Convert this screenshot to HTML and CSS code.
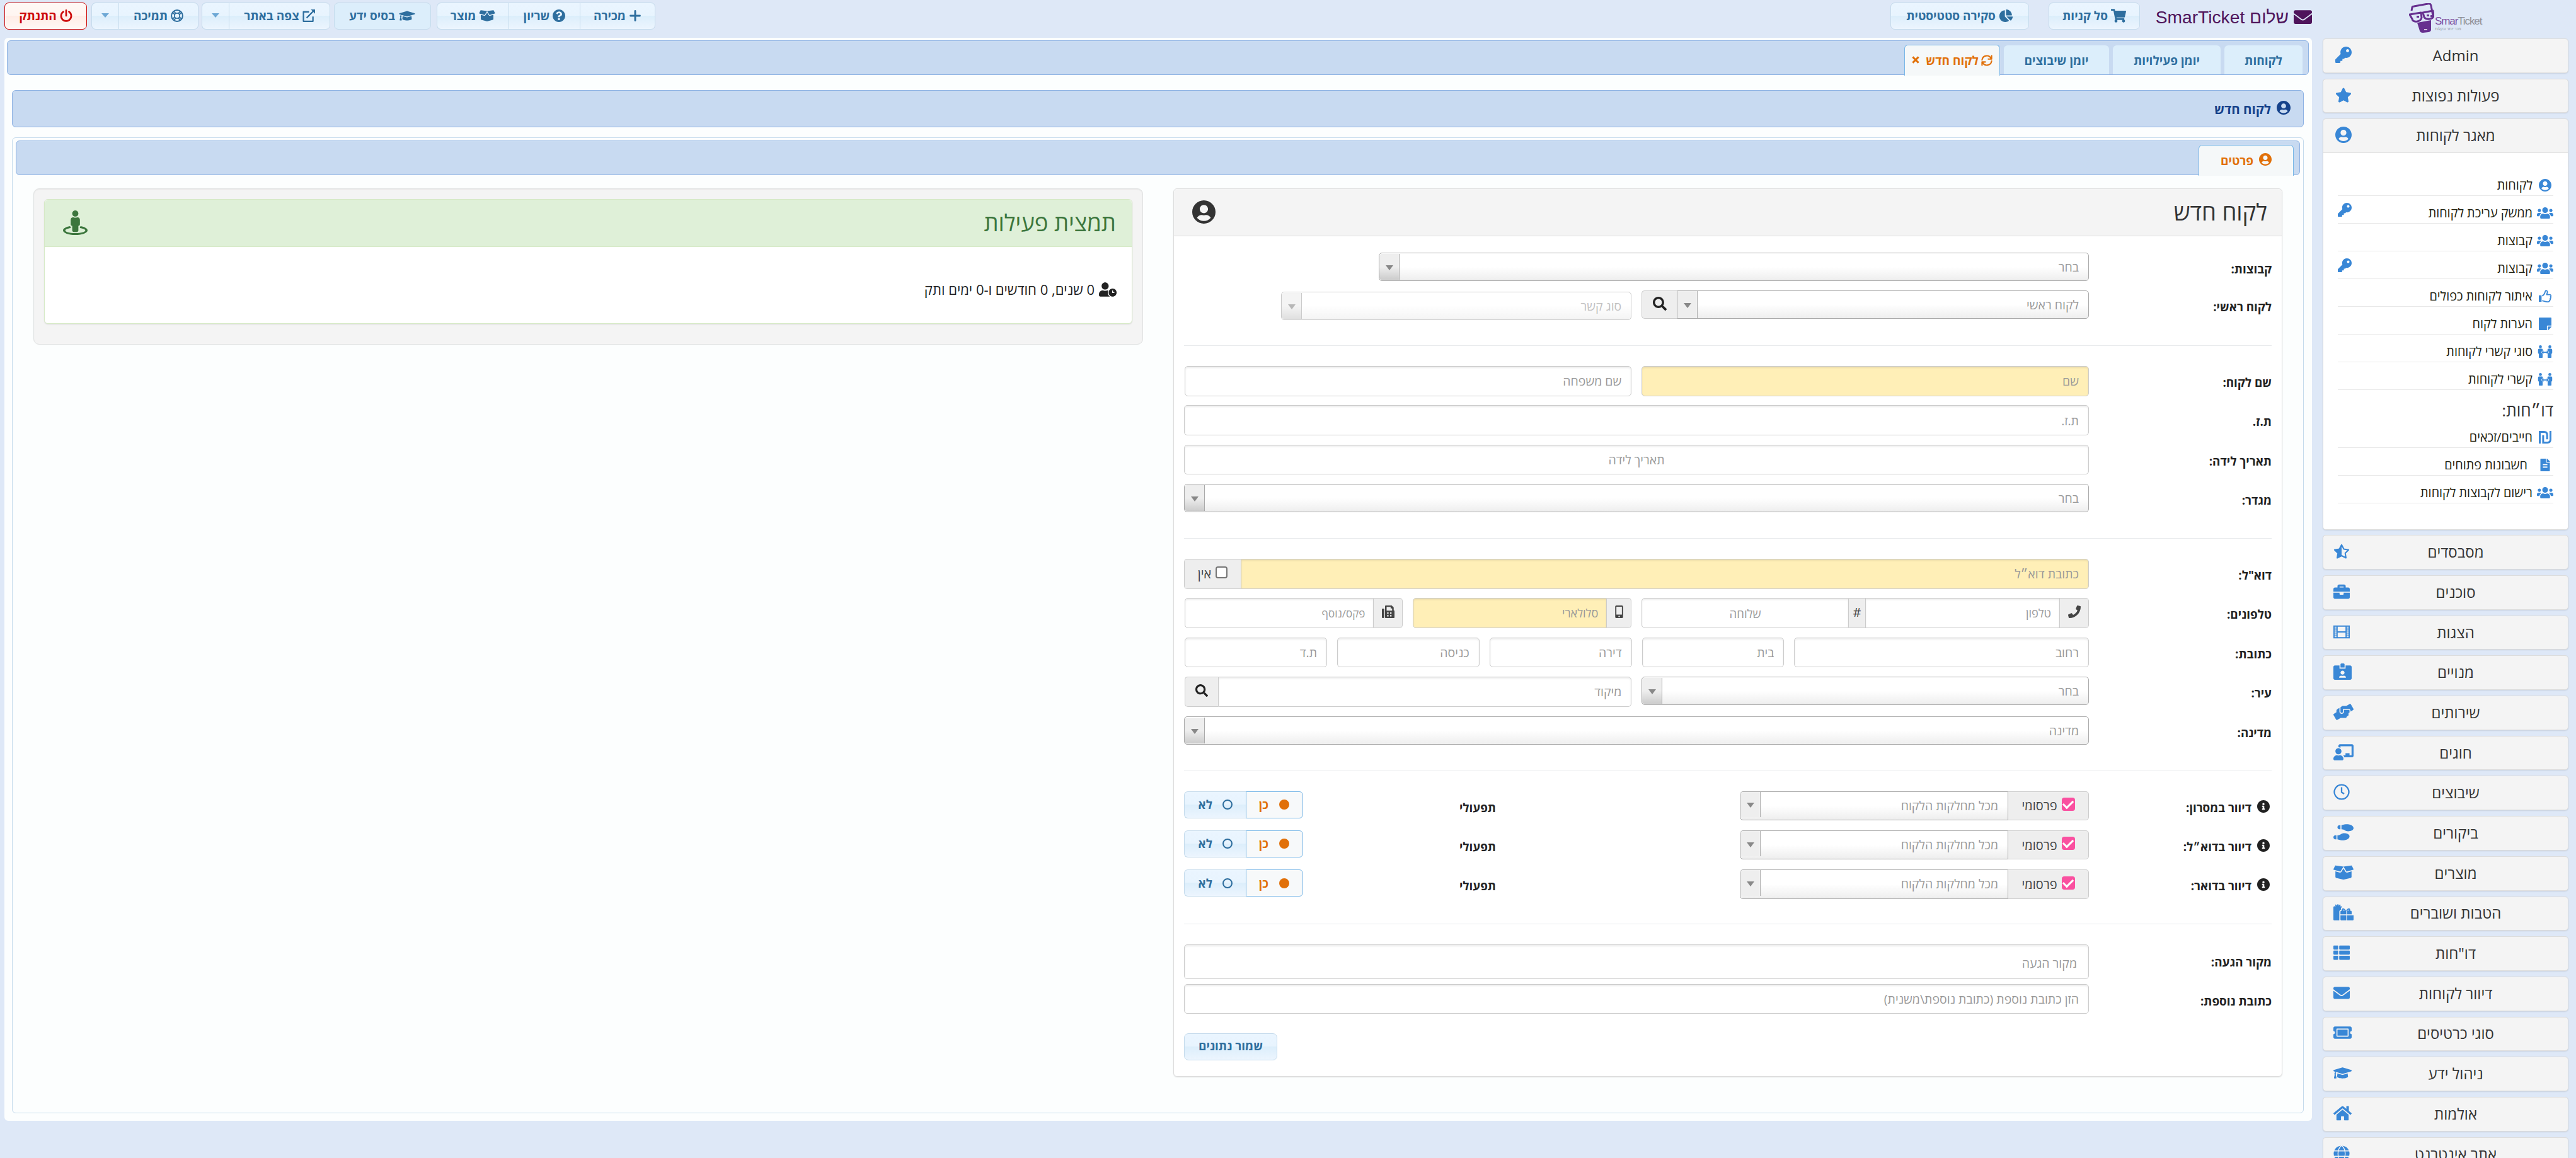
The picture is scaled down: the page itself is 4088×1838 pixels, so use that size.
FILE: index.html
```html
<!DOCTYPE html>
<html lang="he" dir="rtl">
<head>
  <meta charset="utf-8">
  <title>SmarTicket - לקוח חדש</title>
  <link rel="stylesheet" href="styles.css">
</head>
<body>

  <!-- icon sprite -->
  <svg class="sprite" width="0" height="0">
    <symbol id="envelope" viewBox="0 64 512 384"><path d="M502.3 190.8c3.9-3.1 9.7-.2 9.7 4.7V400c0 26.5-21.5 48-48 48H48c-26.5 0-48-21.5-48-48V195.6c0-5 5.7-7.8 9.7-4.7 22.4 17.4 52.1 39.5 154.1 113.6 21.1 15.4 56.7 47.8 92.2 47.6 35.7.3 72-32.8 92.3-47.6 102-74.1 131.6-96.3 154-113.7zM256 320c23.2.4 56.6-29.2 73.4-41.4 132.7-96.3 142.8-104.7 173.4-128.7 5.8-4.5 9.2-11.5 9.2-18.9v-19c0-26.5-21.5-48-48-48H48c-26.5 0-48 21.5-48 48v19c0 7.4 3.4 14.3 9.2 18.9 30.6 23.9 40.7 32.4 173.4 128.7 16.8 12.2 50.2 41.8 73.4 41.4z"/></symbol>
    <symbol id="user-circle" viewBox="0 8 496 496"><path d="M248 8C111 8 0 119 0 256s111 248 248 248 248-111 248-248S385 8 248 8zm0 96c48.6 0 88 39.4 88 88s-39.4 88-88 88-88-39.4-88-88 39.4-88 88-88zm0 344c-58.7 0-111.3-26.6-146.5-68.2 18.8-35.4 55.6-59.8 98.5-59.8 2.4 0 4.8.4 7.1 1.1 13 4.2 26.6 6.9 40.9 6.9 14.3 0 28-2.7 40.9-6.9 2.3-.7 4.7-1.1 7.1-1.1 42.9 0 79.7 24.4 98.5 59.8C359.3 421.4 306.7 448 248 448z"/></symbol>
    <symbol id="star" viewBox="0 0 576 512"><path d="M259.3 17.8L194 150.2 47.9 171.5c-26.2 3.8-36.7 36.1-17.7 54.6l105.7 103-25 145.5c-4.5 26.3 23.2 46 46.4 33.7L288 439.6l130.7 68.7c23.2 12.2 50.9-7.4 46.4-33.7l-25-145.5 105.7-103c19-18.5 8.5-50.8-17.7-54.6L382 150.2 316.7 17.8c-11.7-23.6-45.6-23.9-57.4 0z"/></symbol>
    <symbol id="star-half" viewBox="0 0 576 512"><path fill="none" stroke="currentColor" stroke-width="46" stroke-linejoin="round" d="M288 30l78 148 168 26-118 120 26 164-154-76-154 76 26-164L42 204l168-26z"/><path d="M288 30v382l-154 76 26-164L42 204l168-26z"/></symbol>
    <symbol id="key" viewBox="0 0 512 512"><path d="M512 176.001C512 273.203 433.202 352 336 352c-11.22 0-22.19-1.062-32.827-3.069l-24.012 27.014A23.999 23.999 0 0 1 261.223 384H224v40c0 13.255-10.745 24-24 24h-40v40c0 13.255-10.745 24-24 24H24c-13.255 0-24-10.745-24-24v-78.059c0-6.365 2.529-12.47 7.029-16.971l161.802-161.802C163.108 213.814 160 195.271 160 176 160 78.798 238.797.001 335.999 0 433.488-.001 512 78.511 512 176.001zM336 128c0 26.51 21.49 48 48 48s48-21.49 48-48-21.49-48-48-48-48 21.49-48 48z"/></symbol>
    <symbol id="users" viewBox="0 32 640 448"><path d="M96 224c35.3 0 64-28.7 64-64s-28.7-64-64-64-64 28.7-64 64 28.7 64 64 64zm448 0c35.3 0 64-28.7 64-64s-28.7-64-64-64-64 28.7-64 64 28.7 64 64 64zm32 32h-64c-17.6 0-33.5 7.1-45.1 18.6 40.3 22.1 68.9 62 75.1 109.4h66c17.7 0 32-14.3 32-32v-32c0-35.3-28.7-64-64-64zm-256 0c61.9 0 112-50.1 112-112S381.9 32 320 32 208 82.1 208 144s50.1 112 112 112zm76.8 32h-8.3c-20.8 10-43.9 16-68.5 16s-47.6-6-68.5-16h-8.3C179.6 288 128 339.6 128 403.2V432c0 26.5 21.5 48 48 48h288c26.5 0 48-21.5 48-48v-28.8c0-63.6-51.6-115.2-115.2-115.2zm-223.7-13.4C161.5 263.1 145.6 256 128 256H64c-35.3 0-64 28.7-64 64v32c0 17.7 14.3 32 32 32h65.9c6.3-47.4 34.9-87.3 75.2-109.4z"/></symbol>
    <symbol id="thumb" viewBox="0 0 512 512"><path d="M0 224h112v264H0z"/><path fill="none" stroke="currentColor" stroke-width="46" stroke-linejoin="round" d="M135 250c50-20 95-90 110-130 12-40 15-92 45-92 55 0 70 60 50 105-8 22-20 42-20 60h115c70 0 70 80 35 92 30 25 15 70-12 78 15 30 0 62-25 70 0 45-25 55-75 55-110 0-150-45-223-45"/></symbol>
    <symbol id="note" viewBox="0 32 448 448"><path d="M312 320h136V56c0-13.3-10.7-24-24-24H24C10.7 32 0 42.7 0 56v400c0 13.3 10.7 24 24 24h264V344c0-13.2 10.8-24 24-24zm129 55l-98 98c-4.5 4.5-10.6 7-17 7h-6V352h128v6.1c0 6.3-2.5 12.4-7 16.9z"/></symbol>
    <symbol id="people" viewBox="0 0 576 512"><circle cx="96" cy="62" r="60"/><circle cx="480" cy="62" r="60"/><path d="M44 140h104c20 0 38 14 42 34l8 34-80 76 68 62v140c0 16-12 26-28 26H60c-16 0-28-10-28-26V350C12 340 0 320 0 300V190c0-28 18-50 44-50zM532 140H428c-20 0-38 14-42 34l-8 34 80 76-68 62v140c0 16 12 26 28 26h98c16 0 28-10 28-26V350c20-10 32-30 32-50V190c0-28-18-50-44-50z"/><path d="M140 284l80-74v50h136v-50l80 74-80 74v-50H220v50z"/></symbol>
    <symbol id="shekel" viewBox="0 0 448 448"><path fill="none" stroke="currentColor" stroke-width="66" d="M34 448V34h150c70 0 112 40 112 110v150M154 150v264h150c70 0 110-45 110-110V0"/></symbol>
    <symbol id="file" viewBox="0 0 384 512"><path d="M224 136V0H24C10.7 0 0 10.7 0 24v464c0 13.3 10.7 24 24 24h336c13.3 0 24-10.7 24-24V160H248c-13.2 0-24-10.8-24-24zm64 236c0 6.6-5.4 12-12 12H108c-6.6 0-12-5.4-12-12v-8c0-6.6 5.4-12 12-12h168c6.6 0 12 5.4 12 12v8zm0-64c0 6.6-5.4 12-12 12H108c-6.6 0-12-5.4-12-12v-8c0-6.6 5.4-12 12-12h168c6.6 0 12 5.4 12 12v8zm0-72v8c0 6.6-5.4 12-12 12H108c-6.6 0-12-5.4-12-12v-8c0-6.6 5.4-12 12-12h168c6.6 0 12 5.4 12 12zm96-114.1v6.1H256V0h6.1c6.4 0 12.5 2.5 17 7l97.9 98c4.5 4.5 7 10.6 7 16.9z"/></symbol>
    <symbol id="briefcase" viewBox="0 0 512 512"><path d="M320 336c0 8.84-7.16 16-16 16h-96c-8.84 0-16-7.16-16-16v-48H0v144c0 25.6 22.4 48 48 48h416c25.6 0 48-22.4 48-48V288H320v48zm144-208h-80V80c0-25.6-22.4-48-48-48H176c-25.6 0-48 22.4-48 48v48H48c-25.6 0-48 22.4-48 48v80h512v-80c0-25.6-22.4-48-48-48zm-144 0H192V96h128v32z"/></symbol>
    <symbol id="film" viewBox="0 0 512 512"><path fill="none" stroke="currentColor" stroke-width="38" d="M19 75h474v362H19zM115 75v362M397 75v362M115 256h282"/><path fill="none" stroke="currentColor" stroke-width="24" d="M19 135h96M19 195h96M19 256h96M19 317h96M19 377h96M397 135h96M397 195h96M397 256h96M397 317h96M397 377h96"/></symbol>
    <symbol id="badge" viewBox="0 0 576 512"><path d="M528 64H384v96H192V64H48C21.5 64 0 85.5 0 112v352c0 26.5 21.5 48 48 48h480c26.5 0 48-21.5 48-48V112c0-26.5-21.5-48-48-48zM288 224c35.3 0 64 28.7 64 64s-28.7 64-64 64-64-28.7-64-64 28.7-64 64-64zm93.3 224H194.7c-10.4 0-18.8-10-15.6-19.8 8.3-25.6 32.4-44.2 60.9-44.2h8.2c12.3 5.1 25.7 8 39.8 8s27.6-2.9 39.8-8h8.2c28.4 0 52.5 18.5 60.9 44.2 3.2 9.9-5.2 19.8-15.6 19.8zM352 32c0-17.7-14.3-32-32-32h-64c-17.7 0-32 14.3-32 32v96h128V32z"/></symbol>
    <symbol id="hands" viewBox="0 0 640 512"><path d="M488 192H336v56c0 39.7-32.3 72-72 72s-72-32.3-72-72V126.4l-64.9 39C107.8 176.9 96 197.8 96 220.2v47.3l-80 46.2C.7 322.5-4.6 342.1 4.3 357.4l80 138.6c8.8 15.3 28.4 20.5 43.7 11.7L231.4 448H368c35.3 0 64-28.7 64-64h16c17.7 0 32-14.3 32-32v-64h8c13.3 0 24-10.7 24-24v-48c0-13.3-10.7-24-24-24zm147.7-37.4L555.7 16C546.9.7 527.3-4.5 512 4.3L408.6 64H306.4c-12 0-23.7 3.4-33.9 9.7L239 94.6c-9.4 5.8-15 16.1-15 27.1V248c0 22.1 17.9 40 40 40s40-17.9 40-40v-88h184c30.9 0 56 25.1 56 56v28.5l80-46.2c15.3-8.9 20.5-28.4 11.7-43.7z"/></symbol>
    <symbol id="teacher" viewBox="0 0 640 512"><path d="M208 352c-2.39 0-4.78.35-7.06 1.09C187.98 357.3 174.35 360 160 360c-14.35 0-27.98-2.7-40.95-6.91-2.28-.74-4.66-1.09-7.05-1.09C49.94 352-.33 402.48 0 464.62.14 490.88 21.73 512 48 512h224c26.27 0 47.86-21.12 48-47.38.33-62.14-49.94-112.62-112-112.62zm-48-32c53.02 0 96-42.98 96-96s-42.98-96-96-96-96 42.98-96 96 42.98 96 96 96zM592 0H208c-26.47 0-48 22.25-48 49.59V96c23.42 0 45.1 6.78 64 17.8V64h352v288h-64v-64H384v64h-76.24c19.1 16.69 33.12 38.73 39.69 64H592c26.47 0 48-22.25 48-49.59V49.59C640 22.25 618.47 0 592 0z"/></symbol>
    <symbol id="clock" viewBox="0 0 512 512"><path fill="none" stroke="currentColor" stroke-width="46" d="M256 31a225 225 0 1 0 .1 0zM256 110v155l80 52"/></symbol>
    <symbol id="shoes" viewBox="0 0 640 512"><path d="M192 160h32V32h-32c-35.35 0-64 28.65-64 64s28.65 64 64 64zM0 416c0 35.35 28.65 64 64 64h32V352H64c-35.35 0-64 28.65-64 64zm337.46-128c-34.91 0-76.16 13.12-104.73 32-24.79 16.38-44.52 32-104.73 32v128l57.53 15.97c26.21 7.28 53.01 13.12 80.31 15.05 32.69 2.31 65.6.67 97.58-6.2C472.9 481.3 512 429.22 512 384c0-64-84.18-96-174.54-96zM491.42 7.19C459.44.32 426.53-1.33 393.84.99c-27.3 1.93-54.1 7.77-80.31 15.04L256 32v128c60.2 0 79.94 15.62 104.73 32 28.57 18.88 69.82 32 104.73 32C555.82 224 640 192 640 128c0-45.22-39.1-97.3-148.58-120.81z"/></symbol>
    <symbol id="box" viewBox="0 0 640 512"><path d="M425.7 256c-16.9 0-32.8-9-41.4-23.4L320 126l-64.2 106.6c-8.7 14.5-24.6 23.5-41.5 23.5-4.5 0-9-.6-13.3-1.9L64 215v178c0 14.7 10 27.5 24.2 31l216.2 54.1c10.2 2.5 20.9 2.5 31 0L551.8 424c14.2-3.6 24.2-16.4 24.2-31V215l-137 39.1c-4.3 1.3-8.8 1.9-13.3 1.9zm212.6-112.2L586.8 41c-3.1-6.2-9.8-9.8-16.7-8.9L320 64l91.7 152.1c3.8 6.3 11.4 9.3 18.5 7.3l197.9-56.5c9.9-2.9 14.7-13.9 10.2-23.1zM53.2 41L1.7 143.8c-4.6 9.2.3 20.2 10.1 23l197.9 56.5c7.1 2 14.7-1 18.5-7.3L320 64 69.8 32.1c-6.9-.8-13.5 2.7-16.6 8.9z"/></symbol>
    <symbol id="gifts" viewBox="0 0 640 512"><path d="M32 64h40L50 22l30-14 32 40 16-48h30l14 48 32-40 30 16-22 40h38c12 0 22 8 28 18-34 20-46 60-34 88-40 8-56 40-56 70v272H32c-18 0-32-14-32-32V96c0-18 14-32 32-32z"/><path d="M224 240c0-18 14-32 32-32h20c-30-60 20-90 60-70 30 15 45 40 64 70 20-30 34-55 64-70 40-20 90 10 60 70h24c18 0 32 14 32 32v80H432v-112h-24v112H224zM224 352h184v160H256c-18 0-32-14-32-32zM432 352h208v128c0 18-14 32-32 32H432z"/><path fill="#f4f4f4" d="M312 200c-14-26 14-40 36-14l12 14zM488 200c14-26-14-40-36-14l-12 14z"/></symbol>
    <symbol id="list" viewBox="0 0 512 512"><path d="M24 32h102c13 0 24 11 24 24v80c0 13-11 24-24 24H24c-13 0-24-11-24-24V56c0-13 11-24 24-24zM206 32h282c13 0 24 11 24 24v80c0 13-11 24-24 24H206c-13 0-24-11-24-24V56c0-13 11-24 24-24zM24 192h102c13 0 24 11 24 24v80c0 13-11 24-24 24H24c-13 0-24-11-24-24v-80c0-13 11-24 24-24zM206 192h282c13 0 24 11 24 24v80c0 13-11 24-24 24H206c-13 0-24-11-24-24v-80c0-13 11-24 24-24zM24 352h102c13 0 24 11 24 24v80c0 13-11 24-24 24H24c-13 0-24-11-24-24v-80c0-13 11-24 24-24zM206 352h282c13 0 24 11 24 24v80c0 13-11 24-24 24H206c-13 0-24-11-24-24v-80c0-13 11-24 24-24z"/></symbol>
    <symbol id="mail" viewBox="0 0 512 512"><use href="#envelope" x="0" y="64" width="512" height="384"/></symbol>
    <symbol id="ticket" viewBox="0 0 576 512"><path d="M128 160h320v192H128V160zm400 96c0 26.51 21.49 48 48 48v96c0 26.51-21.49 48-48 48H48c-26.51 0-48-21.49-48-48v-96c26.51 0 48-21.49 48-48s-21.49-48-48-48v-96c0-26.51 21.49-48 48-48h480c26.51 0 48 21.49 48 48v96c-26.51 0-48 21.49-48 48zm-48-104c0-13.255-10.745-24-24-24H120c-13.255 0-24 10.745-24 24v208c0 13.255 10.745 24 24 24h336c13.255 0 24-10.745 24-24V152z"/></symbol>
    <symbol id="cap" viewBox="0 0 640 512"><path d="M622.34 153.2L343.4 67.5c-15.2-4.67-31.6-4.67-46.79 0L17.66 153.2c-23.54 7.23-23.54 38.36 0 45.59l48.63 14.94c-10.67 13.19-17.23 29.28-17.88 46.9C38.78 266.15 32 276.11 32 288c0 10.78 5.68 19.85 13.86 25.65L20.33 428.53C18.11 438.52 25.71 448 35.94 448h56.11c10.24 0 17.84-9.48 15.62-19.47L82.14 313.65C90.32 307.85 96 298.78 96 288c0-11.57-6.47-21.25-15.66-26.87.76-15.02 8.44-28.3 20.69-36.72L296.6 284.5c9.06 2.78 26.44 6.25 46.79 0l278.95-85.7c23.55-7.24 23.55-38.36 0-45.6zM352.79 315.09c-28.53 8.76-52.84 3.92-65.59 0l-145.02-44.55L128 384c0 35.35 85.96 64 192 64s192-28.65 192-64l-14.18-113.47-145.03 44.56z"/></symbol>
    <symbol id="home" viewBox="0 0 576 512"><path d="M280.37 148.26L96 300.11V464a16 16 0 0 0 16 16l112.06-.29a16 16 0 0 0 15.92-16V368a16 16 0 0 1 16-16h64a16 16 0 0 1 16 16v95.64a16 16 0 0 0 16 16.05L464 480a16 16 0 0 0 16-16V300L295.67 148.26a12.19 12.19 0 0 0-15.3 0zM571.6 251.47L488 182.56V44.05a12 12 0 0 0-12-12h-56a12 12 0 0 0-12 12v72.61L318.47 43a48 48 0 0 0-61 0L4.34 251.47a12 12 0 0 0-1.6 16.9l25.5 31A12 12 0 0 0 45.15 301l235.22-193.74a12.19 12.19 0 0 1 15.3 0L530.9 301a12 12 0 0 0 16.9-1.6l25.5-31a12 12 0 0 0-1.7-16.93z"/></symbol>
    <symbol id="globe" viewBox="0 0 496 512"><circle cx="248" cy="256" r="248"/><path fill="none" stroke="#f4f4f4" stroke-width="26" d="M0 172h496M0 340h496M248 0c-150 130-150 382 0 512M248 0c150 130 150 382 0 512"/></symbol>
    <symbol id="cart" viewBox="0 0 576 512"><path d="M528.12 301.319l47.273-208C578.806 78.301 567.391 64 551.99 64H159.208l-9.166-44.81C147.758 8.021 137.93 0 126.529 0H24C10.745 0 0 10.745 0 24v16c0 13.255 10.745 24 24 24h69.883l70.248 343.435C147.325 417.1 136 435.222 136 456c0 30.928 25.072 56 56 56s56-25.072 56-56c0-15.674-6.447-29.835-16.824-40h209.647C430.447 426.165 424 440.326 424 456c0 30.928 25.072 56 56 56s56-25.072 56-56c0-22.172-12.888-41.332-31.579-50.405l5.517-24.276c3.413-15.018-8.002-29.319-23.403-29.319H218.117l-6.545-32h293.145c11.206 0 20.92-7.754 23.403-18.681z"/></symbol>
    <symbol id="pie" viewBox="0 0 544 512"><path d="M527.79 288H290.5l158.03 158.03c6.04 6.04 15.98 6.53 22.19.68 38.7-36.46 65.32-85.61 73.13-140.86 1.34-9.46-6.51-17.85-16.06-17.85zm-15.83-64.8C503.72 103.74 408.26 8.28 288.8.04 279.68-.59 272 7.1 272 16.24V240h223.77c9.14 0 16.82-7.68 16.19-16.8zM224 288V50.71c0-9.55-8.39-17.4-17.84-16.06C86.99 51.49-4.1 155.6.14 280.37 4.5 408.51 114.83 513.59 243.03 511.98c50.4-.63 96.97-16.87 135.26-44.03 7.9-5.6 8.42-17.23 1.57-24.08L224 288z"/></symbol>
    <symbol id="plus" viewBox="0 0 448 512"><path fill="none" stroke="currentColor" stroke-width="76" stroke-linecap="round" d="M224 66v380M34 256h380"/></symbol>
    <symbol id="question" viewBox="8 8 496 496"><path d="M504 256c0 136.997-111.043 248-248 248S8 392.997 8 256C8 119.083 119.043 8 256 8s248 111.083 248 248zM262.655 90c-54.497 0-89.255 22.957-116.549 63.758-3.536 5.286-2.353 12.415 2.715 16.258l34.699 26.31c5.205 3.947 12.621 3.008 16.665-2.122 17.864-22.658 30.113-35.797 57.303-35.797 20.429 0 45.698 13.148 45.698 32.958 0 14.976-12.363 22.667-32.534 33.976C247.128 238.528 216 254.941 216 296v4c0 6.627 5.373 12 12 12h56c6.627 0 12-5.373 12-12v-1.333c0-28.462 83.186-29.647 83.186-106.667 0-58.002-60.165-102-116.531-102zM256 338c-25.365 0-46 20.635-46 46 0 25.364 20.635 46 46 46s46-20.636 46-46c0-25.365-20.635-46-46-46z"/></symbol>
    <symbol id="external" viewBox="0 0 512 512"><path fill="none" stroke="currentColor" stroke-width="58" stroke-linejoin="round" d="M270 96H40v386h386V290M170 342L440 72"/><path d="M340 0h172v172z"/></symbol>
    <symbol id="ring" viewBox="0 0 512 512"><g fill="none" stroke="currentColor"><circle cx="256" cy="256" r="228" stroke-width="50"/><circle cx="256" cy="256" r="108" stroke-width="44"/><path stroke-width="44" d="M74 124l96 88M124 74l88 96M438 124l-96 88M388 74l-88 96M74 388l96-88M124 438l88-96M438 388l-96-88M388 438l-88-96"/></g></symbol>
    <symbol id="power" viewBox="0 0 512 512"><path fill="none" stroke="currentColor" stroke-width="70" stroke-linecap="round" d="M256 36v220M142 92a206 206 0 1 0 228 0"/></symbol>
    <symbol id="sync" viewBox="0 0 512 512"><path fill="none" stroke="currentColor" stroke-width="60" stroke-linecap="round" stroke-linejoin="round" d="M40 230A216 216 0 0 1 450 170M472 40v150H322M472 282A216 216 0 0 1 62 342M40 472V322h150"/></symbol>
    <symbol id="close" viewBox="0 0 352 352"><path stroke="currentColor" stroke-width="84" d="M40 40l272 272M312 40L40 312"/></symbol>
    <symbol id="search" viewBox="0 0 512 512"><path d="M505 442.7L405.3 343c-4.5-4.5-10.6-7-17-7H372c27.6-35.3 44-79.7 44-128C416 93.1 322.9 0 208 0S0 93.1 0 208s93.1 208 208 208c48.3 0 92.7-16.4 128-44v16.3c0 6.4 2.5 12.5 7 17l99.7 99.7c9.4 9.4 24.6 9.4 33.9 0l28.3-28.3c9.4-9.4 9.4-24.6.1-34zM208 336c-70.7 0-128-57.2-128-128 0-70.7 57.2-128 128-128 70.7 0 128 57.2 128 128 0 70.7-57.2 128-128 128z"/></symbol>
    <symbol id="phone" viewBox="0 0 512 512"><path d="M493.4 24.6l-104-24c-11.3-2.6-22.9 3.3-27.5 13.9l-48 112c-4.2 9.8-1.4 21.3 6.9 28l60.6 49.6c-36 76.7-98.9 140.5-177.2 177.2l-49.6-60.6c-6.8-8.3-18.2-11.1-28-6.9l-112 48C3.9 366.5-2 378.1.6 389.4l24 104C27.1 504.2 36.7 512 48 512c256.1 0 464-207.5 464-464 0-11.2-7.7-20.9-18.6-23.4z"/></symbol>
    <symbol id="mobile" viewBox="0 0 320 512"><path fill-rule="evenodd" d="M48 0h224c26 0 48 22 48 48v416c0 26-22 48-48 48H48c-26 0-48-22-48-48V48C0 22 22 0 48 0zm0 54v320h224V54zm112 360a30 30 0 1 0 .1 0z"/></symbol>
    <symbol id="fax" viewBox="0 0 512 512"><path d="M30 130h36c16 0 30 14 30 30v322c0 16-14 30-30 30H30c-16 0-30-14-30-30V160c0-16 14-30 30-30z"/><path fill-rule="evenodd" d="M160 0h240l80 80v120c18 0 32 14 32 32v248c0 18-14 32-32 32H160c-18 0-32-14-32-32V32c0-18 14-32 32-32zm32 60v150h224V120h-60V60zm20 220v56h60v-56zm120 0v56h60v-56zm-120 110v56h60v-56zm120 0v56h60v-56z"/></symbol>
    <symbol id="info" viewBox="8 8 496 496"><path d="M256 8C119.043 8 8 119.083 8 256c0 136.997 111.043 248 248 248s248-111.003 248-248C504 119.083 392.957 8 256 8zm0 110c23.196 0 42 18.804 42 42s-18.804 42-42 42-42-18.804-42-42 18.804-42 42-42zm56 254c0 6.627-5.373 12-12 12h-88c-6.627 0-12-5.373-12-12v-24c0-6.627 5.373-12 12-12h12v-64h-12c-6.627 0-12-5.373-12-12v-24c0-6.627 5.373-12 12-12h64c6.627 0 12 5.373 12 12v100h12c6.627 0 12 5.373 12 12v24z"/></symbol>
    <symbol id="street" viewBox="0 0 512 512"><path d="M367.9 329.76c-4.62 5.3-9.78 10.1-15.9 13.65v22.94c66.52 9.34 112 28.05 112 49.65 0 30.93-93.12 56-208 56S48 446.93 48 416c0-21.6 45.48-40.3 112-49.65v-22.94c-6.12-3.55-11.28-8.35-15.9-13.65C58.87 345.34 0 378.05 0 416c0 53.02 114.62 96 256 96s256-42.98 256-96c0-37.95-58.87-70.66-144.1-86.24zM256 128c35.35 0 64-28.65 64-64S291.35 0 256 0s-64 28.65-64 64 28.65 64 64 64zm-64 192v96c0 17.67 14.33 32 32 32h64c17.67 0 32-14.33 32-32v-96c17.67 0 32-14.33 32-32v-96c0-26.51-21.49-48-48-48h-11.8c-11.07 5.03-23.26 8-36.2 8s-25.13-2.97-36.2-8H208c-26.51 0-48 21.49-48 48v96c0 17.67 14.33 32 32 32z"/></symbol>
    <symbol id="user-clock" viewBox="0 0 640 512"><path d="M496 224c-79.6 0-144 64.4-144 144s64.4 144 144 144 144-64.4 144-144-64.4-144-144-144zm64 150.3c0 5.3-4.4 9.7-9.7 9.7h-60.6c-5.3 0-9.7-4.4-9.7-9.7v-76.6c0-5.3 4.4-9.7 9.7-9.7h12.6c5.3 0 9.7 4.4 9.7 9.7V352h38.3c5.3 0 9.7 4.4 9.7 9.7v12.6zM320 368c0-27.8 6.7-54.1 18.2-77.5-8-1.5-16.2-2.5-24.6-2.5h-16.7c-22.2 10.2-46.9 16-72.9 16s-50.6-5.8-72.9-16h-16.7C60.2 288 0 348.2 0 422.4V464c0 26.5 21.5 48 48 48h347.1c-45.3-31.9-75.1-84.5-75.1-144zm-96-112c70.7 0 128-57.3 128-128S294.7 0 224 0 96 57.3 96 128s57.3 128 128 128z"/></symbol>
  </svg>

  <div class="page">

    <!-- side menu -->
    <aside class="sidebar">
      <div class="logo">
        <svg class="logo-mark" viewBox="0 0 40 47">
          <path fill="none" stroke="#67308f" stroke-width="3" stroke-linejoin="round" d="M4 12L5 7q0-2 3-2l22-4q4-1 5 3l3 16-4 1"/>
          <path fill="none" stroke="#67308f" stroke-width="3" stroke-linejoin="round" d="M1 18l18-3 1 8q-1 5-7 6-7 1-8-4zM22 15l16-3 1 7q0 5-6 6-7 1-9-3z"/>
          <path fill="#67308f" d="M13 31l22-4v15q0 3-4 4l-9 1q-4 0-5-3zM12 20h4v3h-4zM28 18h4v3h-4z"/>
          <path stroke="#fff" stroke-width="1.4" d="M24 42h5"/>
        </svg>
        <div class="logo-text" dir="ltr"><div><b>Smar</b>Ticket</div><small>מכר יותר ובקלות</small></div>
      </div>

      <div class="menu"><span>Admin</span><svg class="fa"><use href="#key"/></svg></div>
      <div class="menu"><span>פעולות נפוצות</span><svg class="fa"><use href="#star"/></svg></div>
      <div class="menu open"><span>מאגר לקוחות</span><svg class="fa"><use href="#user-circle"/></svg></div>
      <div class="submenu">
        <a class="item"><svg class="fi"><use href="#user-circle"/></svg>לקוחות</a>
        <a class="item"><svg class="fi wide"><use href="#users"/></svg>ממשק עריכת לקוחות<svg class="lock"><use href="#key"/></svg></a>
        <a class="item"><svg class="fi wide"><use href="#users"/></svg>קבוצות</a>
        <a class="item"><svg class="fi wide"><use href="#users"/></svg>קבוצות<svg class="lock"><use href="#key"/></svg></a>
        <a class="item"><svg class="fi"><use href="#thumb"/></svg>איתור לקוחות כפולים</a>
        <a class="item"><svg class="fi"><use href="#note"/></svg>הערות לקוח</a>
        <a class="item"><svg class="fi wide"><use href="#people"/></svg>סוגי קשרי לקוחות</a>
        <a class="item"><svg class="fi wide"><use href="#people"/></svg>קשרי לקוחות</a>
        <h4>דו״חות:</h4>
        <a class="item"><svg class="fi"><use href="#shekel"/></svg>חייבים/זכאים</a>
        <a class="item shifted"><svg class="fi"><use href="#file"/></svg>חשבונות פתוחים</a>
        <a class="item"><svg class="fi wide"><use href="#users"/></svg>רישום לקבוצות לקוחות</a>
      </div>
      <div class="menu low"><span>מסבסדים</span><svg class="fa"><use href="#star-half"/></svg></div>
      <div class="menu low"><span>סוכנים</span><svg class="fa"><use href="#briefcase"/></svg></div>
      <div class="menu low"><span>הצגות</span><svg class="fa"><use href="#film"/></svg></div>
      <div class="menu low"><span>מנויים</span><svg class="fa w28"><use href="#badge"/></svg></div>
      <div class="menu low"><span>שירותים</span><svg class="fa w32"><use href="#hands"/></svg></div>
      <div class="menu low"><span>חוגים</span><svg class="fa w32"><use href="#teacher"/></svg></div>
      <div class="menu low"><span>שיבוצים</span><svg class="fa"><use href="#clock"/></svg></div>
      <div class="menu low"><span>ביקורים</span><svg class="fa w32"><use href="#shoes"/></svg></div>
      <div class="menu low"><span>מוצרים</span><svg class="fa w32"><use href="#box"/></svg></div>
      <div class="menu low"><span>הטבות ושוברים</span><svg class="fa w32"><use href="#gifts"/></svg></div>
      <div class="menu low"><span>דו"חות</span><svg class="fa"><use href="#list"/></svg></div>
      <div class="menu low"><span>דיוור לקוחות</span><svg class="fa"><use href="#mail"/></svg></div>
      <div class="menu low"><span>סוגי כרטיסים</span><svg class="fa w28"><use href="#ticket"/></svg></div>
      <div class="menu low"><span>ניהול ידע</span><svg class="fa w28"><use href="#cap"/></svg></div>
      <div class="menu low"><span>אולמות</span><svg class="fa w28"><use href="#home"/></svg></div>
      <div class="menu low"><span>אתר אינטרנט</span><svg class="fa"><use href="#globe"/></svg></div>
    </aside>

    <div class="content">

      <!-- top toolbar -->
      <header class="topbar">
        <div class="hello"><svg class="hello-icon"><use href="#envelope"/></svg><span>שלום SmarTicket</span></div>
        <a class="btn cart"><svg class="bi"><use href="#cart"/></svg>סל קניות</a>
        <a class="btn stats"><svg class="bi"><use href="#pie"/></svg>סקירה סטטיסטית</a>

        <div class="tools">
          <div class="group g-new">
            <a class="btn b-sale"><svg class="bi"><use href="#plus"/></svg>מכירה</a>
            <a class="btn b-hold"><svg class="bi"><use href="#question"/></svg>שריון</a>
            <a class="btn b-prod"><svg class="bi w25"><use href="#box"/></svg>מוצר</a>
          </div>
          <a class="btn kb"><svg class="bi w28"><use href="#cap"/></svg>בסיס ידע</a>
          <div class="group g-site">
            <a class="btn b-main"><svg class="bi"><use href="#external"/></svg>צפה באתר</a>
            <a class="btn b-drop"><i class="caret"></i></a>
          </div>
          <div class="group g-help">
            <a class="btn b-main"><svg class="bi"><use href="#ring"/></svg>תמיכה</a>
            <a class="btn b-drop"><i class="caret"></i></a>
          </div>
          <a class="btn logout"><svg class="bi"><use href="#power"/></svg>התנתק</a>
        </div>
      </header>

      <main class="main">
        <nav class="tabs">
          <a class="tab t1">לקוחות</a>
          <a class="tab t2">יומן פעילויות</a>
          <a class="tab t3">יומן שיבוצים</a>
          <a class="tab t4 active"><svg class="ti"><use href="#sync"/></svg>לקוח חדש<svg class="tx"><use href="#close"/></svg></a>
        </nav>

        <div class="titlebar"><svg class="title-icon"><use href="#user-circle"/></svg>לקוח חדש</div>

        <div class="box">
          <nav class="tabs inner">
            <a class="tab details active"><svg class="di"><use href="#user-circle"/></svg>פרטים</a>
          </nav>

          <div class="columns">
            <section class="panel">
              <div class="panel-head"><h2>לקוח חדש</h2><svg class="head-icon"><use href="#user-circle"/></svg></div>
              <form class="panel-body">

                <div class="part first">
                  <div class="row">
                    <label>קבוצות:</label>
                    <div class="fields"><div class="select groups"><span>בחר</span><b><i></i></b></div></div>
                  </div>
                  <div class="row">
                    <label>לקוח ראשי:</label>
                    <div class="fields">
                      <div class="joined half"><div class="select plain"><span>לקוח ראשי</span><b><i></i></b></div><div class="addon find"><svg><use href="#search"/></svg></div></div>
                      <div class="select relation"><span>סוג קשר</span><b><i></i></b></div>
                    </div>
                  </div>
                </div>

                <div class="part">
                  <div class="row">
                    <label>שם לקוח:</label>
                    <div class="fields"><input class="half must" placeholder="שם"><input class="half" placeholder="שם משפחה"></div>
                  </div>
                  <div class="row">
                    <label>ת.ז.</label>
                    <div class="fields"><input class="full" placeholder="ת.ז."></div>
                  </div>
                  <div class="row">
                    <label>תאריך לידה:</label>
                    <div class="fields"><input class="full center" placeholder="תאריך לידה"></div>
                  </div>
                  <div class="row">
                    <label>מגדר:</label>
                    <div class="fields"><div class="select full"><span>בחר</span><b><i></i></b></div></div>
                  </div>
                </div>

                <div class="part">
                  <div class="row">
                    <label>דוא"ל:</label>
                    <div class="fields"><div class="joined full"><input class="must" placeholder="כתובת דוא״ל"><div class="addon none"><input type="checkbox">אין</div></div></div>
                  </div>
                  <div class="row">
                    <label>טלפונים:</label>
                    <div class="fields">
                      <div class="joined half phone"><div class="addon a-phone"><svg><use href="#phone"/></svg></div><input class="num" placeholder="טלפון"><div class="addon hash">#</div><input class="center ext" placeholder="שלוחה"></div>
                      <div class="joined mob"><div class="addon a-mob"><svg><use href="#mobile"/></svg></div><input class="must" placeholder="סלולארי"></div>
                      <div class="joined mob"><div class="addon a-fax"><svg><use href="#fax"/></svg></div><input class="fax" placeholder="פקס/נוסף"></div>
                    </div>
                  </div>
                  <div class="row">
                    <label>כתובת:</label>
                    <div class="fields"><input class="street" placeholder="רחוב"><input placeholder="בית"><input placeholder="דירה"><input placeholder="כניסה"><input placeholder="ת.ד"></div>
                  </div>
                  <div class="row">
                    <label>עיר:</label>
                    <div class="fields">
                      <div class="select half"><span>בחר</span><b><i></i></b></div>
                      <div class="joined half"><input placeholder="מיקוד"><div class="addon zip"><svg><use href="#search"/></svg></div></div>
                    </div>
                  </div>
                  <div class="row">
                    <label>מדינה:</label>
                    <div class="fields"><div class="select full"><span>מדינה</span><b><i></i></b></div></div>
                  </div>
                </div>

                <div class="part mailing">
                  <div class="row">
                    <label><svg class="info"><use href="#info"/></svg>דיוור במסרון:</label>
                    <div class="fields">
                      <div class="joined dept"><div class="addon promo"><input type="checkbox" checked>פרסומי</div><div class="select plain"><span>מכל מחלקות הלקוח</span><b><i></i></b></div></div>
                      <label class="oper">תפעולי</label>
                      <div class="toggle"><a class="yes"><i></i>כן</a><a class="no"><i></i>לא</a></div>
                    </div>
                  </div>
                  <div class="row">
                    <label><svg class="info"><use href="#info"/></svg>דיוור בדוא״ל:</label>
                    <div class="fields">
                      <div class="joined dept"><div class="addon promo"><input type="checkbox" checked>פרסומי</div><div class="select plain"><span>מכל מחלקות הלקוח</span><b><i></i></b></div></div>
                      <label class="oper">תפעולי</label>
                      <div class="toggle"><a class="yes"><i></i>כן</a><a class="no"><i></i>לא</a></div>
                    </div>
                  </div>
                  <div class="row">
                    <label><svg class="info"><use href="#info"/></svg>דיוור בדואר:</label>
                    <div class="fields">
                      <div class="joined dept"><div class="addon promo"><input type="checkbox" checked>פרסומי</div><div class="select plain"><span>מכל מחלקות הלקוח</span><b><i></i></b></div></div>
                      <label class="oper">תפעולי</label>
                      <div class="toggle"><a class="yes"><i></i>כן</a><a class="no"><i></i>לא</a></div>
                    </div>
                  </div>
                </div>

                <div class="part last">
                  <div class="row">
                    <label>מקור הגעה:</label>
                    <div class="fields"><input class="full tall" placeholder="מקור הגעה"></div>
                  </div>
                  <div class="row">
                    <label>כתובת נוספת:</label>
                    <div class="fields"><input class="full" placeholder="הזן כתובת נוספת (כתובת נוספת\משנית)"></div>
                  </div>
                </div>

                <div class="actions"><a class="btn save">שמור נתונים</a></div>
              </form>
            </section>

            <section class="well">
              <div class="summary">
                <div class="summary-head"><h2>תמצית פעילות</h2><svg><use href="#street"/></svg></div>
                <div class="summary-body"><svg><use href="#user-clock"/></svg>0 שנים, 0 חודשים ו-0 ימים ותק</div>
              </div>
            </section>
          </div>
        </div>
      </main>
    </div>
  </div>

</body>
</html>
```

FILE: styles.css
```css
* {
  box-sizing: border-box;
}

body {
  margin: 0;
  height: 1838px;
  overflow: hidden;
  background: #dee8f7;
  font-family: "Open Sans", "Liberation Sans", Arial, sans-serif;
  font-size: 19px;
  color: #222;
}

svg {
  fill: currentColor;
  flex: none;
}

.sprite {
  position: absolute;
}

.page {
  display: flex;
  gap: 17px;
  padding: 0 12px 0 7px;
}

/* side menu */
.sidebar {
  width: 390px;
  flex: none;
}

.logo {
  height: 61px;
  padding: 5px 136px 0 0;
  display: flex;
  flex-direction: row-reverse;
  justify-content: flex-end;
  gap: 1px;
}

.logo-mark {
  width: 40px;
  height: 47px;
}

.logo-text {
  padding-top: 19px;
  color: #8d8f98;
  font-family: "Liberation Sans", Arial, sans-serif;
  font-size: 17px;
  line-height: 20px;
  letter-spacing: -1.1px;
  width: 76px;
}

.logo-text b {
  color: #7b4a9e;
  font-weight: normal;
}

.logo-text small {
  display: block;
  font-size: 6px;
  line-height: 4px;
  letter-spacing: 0;
}

.menu {
  height: 54.7px;
  margin-bottom: 9px;
  padding: 0 18px 0 19px;
  display: flex;
  align-items: center;
  justify-content: space-between;
  background: #f4f4f4;
  border: 1px solid #ddd;
  border-radius: 5px;
  box-shadow: 0 1px 2px rgba(0,0,0,0.1);
  color: #333;
  font-size: 24px;
  font-weight: 500;
}

.menu span {
  width: 320px;
  flex: none;
  padding-bottom: 2px;
  text-align: center;
}

.menu.low {
  padding-left: 16px;
}

.menu .fa {
  width: 26px;
  height: 26px;
  margin-bottom: 3px;
  color: #3987d6;
}

.menu .fa.w28 {
  width: 29px;
}

.menu .fa.w32 {
  width: 32px;
}

.menu.open {
  margin-bottom: 0;
  border-radius: 5px 5px 0 0;
}

.submenu {
  height: 597.6px;
  margin-bottom: 8.7px;
  padding: 24px 23px 0;
  background: #fff;
  border: 1px solid #ddd;
  border-top: 0;
  border-radius: 0 0 5px 5px;
  box-shadow: 0 1px 2px rgba(0,0,0,0.1);
}

.item {
  height: 44px;
  padding-top: 10px;
  display: flex;
  align-items: center;
  border-bottom: 1px solid #e8e8e8;
  color: #222211;
  font-size: 19.8px;
  font-weight: 500;
}

.item .fi {
  width: 20px;
  height: 20px;
  margin: 0 3px 0 10px;
  color: #3987d6;
}

.item .fi.wide {
  width: 26px;
  margin: 0 0 0 7px;
}

.item.shifted .fi {
  margin-left: 18px;
}

.item .lock {
  width: 22px;
  height: 22px;
  margin-right: auto;
  margin-bottom: 10px;
  color: #3987d6;
}

.submenu h4 {
  height: 48px;
  margin: 0;
  padding-top: 14px;
  font-size: 26px;
  font-weight: normal;
  line-height: 36px;
  color: #333;
}

/* top toolbar */
.content {
  flex: 1;
}

.topbar {
  height: 60px;
  padding-top: 4px;
  display: flex;
}

.hello {
  width: 273px;
  height: 46px;
  display: flex;
  align-items: center;
  gap: 8px;
  font-family: "Liberation Sans", Arial, sans-serif;
  font-size: 28.2px;
  color: #4f145b;
}

.hello-icon {
  width: 29px;
  height: 22px;
}

.btn {
  height: 43px;
  padding-bottom: 2px;
  display: flex;
  align-items: center;
  justify-content: center;
  gap: 5px;
  border: 1px solid #c5dbec;
  border-radius: 7px;
  background: linear-gradient(#eaf5ff, #e8f4fe 49%, #dceefb 50%, #ecf5fe);
  color: #2e6e9e;
  font-size: 19px;
  font-weight: bold;
}

.bi {
  width: 20px;
  height: 20px;
}

.bi.w25 {
  width: 26px;
}

.bi.w28 {
  width: 28px;
}

.cart {
  width: 145px;
  margin-left: 31px;
}

.stats {
  width: 220px;
}

.cart .bi {
  width: 24px;
  height: 22px;
}

.stats .bi {
  width: 23px;
}

.tools {
  margin-right: auto;
  display: flex;
}

.group {
  display: flex;
}

.group .btn {
  border-radius: 0;
}

.group .btn:first-child {
  border-radius: 0 7px 7px 0;
}

.group .btn:last-child {
  border-radius: 7px 0 0 7px;
}

.group .btn + .btn {
  border-right: 0;
}

.b-sale { width: 120px; }
.b-hold { width: 113px; }
.b-prod { width: 114px; }
.kb {
  width: 154px;
  margin: 0 9px 0 6px;
  background: #dceefb;
}

.g-site .b-main { width: 161px; }
.g-site { margin-left: 5px; }
.g-help .b-main { width: 127px; }
.g-help { margin-left: 7px; }
.b-drop { width: 43px; }

.caret {
  border: 6px solid transparent;
  border-top: 7px solid #6da8d5;
  border-bottom: 0;
}

.logout {
  width: 131px;
  border-color: #cd0a0a;
  background: linear-gradient(#fff8f5, #fff5f1 49%, #ffece6 50%, #fff8f5);
  color: #cd0a0a;
}

/* main area */
.main {
  height: 1719px;
  padding: 4px 5px 0 4px;
  background: #fcfefe;
  border-radius: 6px;
}

.tabs {
  height: 55px;
  display: flex;
  align-items: flex-end;
  gap: 6px;
  padding-right: 9px;
  background: #c8daf1;
  border: 1px solid #8db2e3;
  border-radius: 6px;
}

.tab {
  height: 46px;
  display: flex;
  align-items: center;
  justify-content: center;
  padding-top: 2px;
  background: #dceefb;
  border-radius: 6px 6px 0 0;
  color: #2e6e9e;
  font-size: 19px;
  font-weight: bold;
}

.tab.active {
  height: 49px;
  margin-bottom: -2px;
  padding-top: 0;
  background: #f5f8f9;
  border: 1px solid #79b7e7;
  border-bottom: 0;
  color: #e17009;
}

.t1 { width: 124px; }
.t2 { width: 171px; }
.t3 { width: 167px; }
.t4 { width: 152px; }

.ti {
  width: 18px;
  height: 18px;
  margin-left: 4px;
}

.tx {
  width: 12px;
  height: 12px;
  margin-right: 10px;
  margin-bottom: 3px;
}

.titlebar {
  height: 59px;
  margin: 24px 8px 16px;
  padding-right: 20px;
  display: flex;
  align-items: center;
  gap: 9px;
  background: #c8daf1;
  border: 1px solid #8db2e3;
  border-radius: 6px;
  color: #15428b;
  font-size: 20.5px;
  font-weight: bold;
}

.title-icon {
  width: 22px;
  height: 22px;
  margin-bottom: 4px;
}

.box {
  height: 1549px;
  margin: 0 8px;
  padding: 4px 5px;
  border: 1px solid #c5dbec;
  border-radius: 6px;
}

.details {
  width: 151px;
}

.di {
  width: 20px;
  height: 20px;
  margin-left: 9px;
  margin-bottom: 4px;
}

.columns {
  display: flex;
  gap: 48px;
  padding: 21px 28px 0;
}

.panel {
  width: 1760px;
  height: 1410px;
  flex: none;
  background: #fff;
  border: 1px solid #ddd;
  border-radius: 6px;
  box-shadow: 0 1px 2px rgba(0,0,0,0.1);
}

.panel-head {
  height: 75px;
  padding: 0 23px 2px 29px;
  display: flex;
  align-items: center;
  justify-content: space-between;
  background: #f4f4f4;
  border-bottom: 1px solid #ddd;
  border-radius: 6px 6px 0 0;
}

h2 {
  margin: 0;
  font-size: 36.5px;
  font-weight: 500;
  color: #333;
}

.head-icon {
  width: 37px;
  height: 37px;
  color: #333;
}

.panel-body {
  padding: 26px 16px 0;
}

.part {
  padding: 32px 0 23.5px;
  border-bottom: 1px solid #e8eaec;
}

.part.first {
  padding: 0 0 27px;
}

.part.last {
  padding-bottom: 0;
  border: 0;
}

.row {
  height: 62.4px;
  display: flex;
}

.first .row {
  height: 60px;
}

label {
  width: 290px;
  height: 49px;
  flex: none;
  padding-top: 3px;
  display: flex;
  align-items: center;
  font-size: 18.8px;
  font-weight: bold;
}

.last label {
  padding-top: 6px;
}

.fields {
  flex: 1;
  display: flex;
  align-items: flex-start;
  gap: 16px;
}

input {
  width: 225.8px;
  height: 47.5px;
  padding: 0 15px;
  border: 1px solid #ccc;
  border-radius: 5px;
  background: #fff;
  box-shadow: inset 0 2px 3px rgba(0,0,0,0.08);
  font: inherit;
  font-size: 19.5px;
}

input::placeholder {
  color: #999;
}

input.must {
  background: #ffefb7;
}

.center {
  text-align: center;
}

.street { width: 467.6px; }
.half { width: 709.7px; }
.full { width: 100%; }

input.tall {
  height: 55px;
  padding-top: 4px;
  padding-right: 18px;
}

.select {
  height: 45px;
  display: flex;
  border: 1px solid #aaa;
  border-radius: 5px;
  background: linear-gradient(#fff 50%, #eee);
  color: #999;
  font-size: 19.5px;
}

.select span {
  flex: 1;
  padding-right: 15px;
  line-height: 43px;
}

.select b {
  width: 32px;
  margin: 1px 0;
  display: flex;
  align-items: center;
  justify-content: center;
  border-right: 1px solid #aaa;
  border-radius: 4px 0 0 4px;
  background: linear-gradient(#eee 50%, #ccc);
}

.select b i {
  margin-top: 3px;
  border: 6px solid transparent;
  border-top: 8px solid #888;
  border-bottom: 0;
}

.groups { width: 1127px; }

.relation {
  width: 556px;
  margin-top: 2px;
  opacity: 0.6;
}

.joined {
  display: flex;
}

.joined > input,
.joined > .select {
  flex: 1;
  min-width: 0;
}

.joined > * {
  border-radius: 0;
}

.joined > *:first-child {
  border-radius: 0 5px 5px 0;
}

.joined > *:last-child {
  border-radius: 5px 0 0 5px;
}

.select.plain b {
  margin: 0;
  border-radius: 0;
  background: #eee;
}

.addon {
  flex: none;
  display: flex;
  align-items: center;
  justify-content: center;
  background: #eee;
  border: 1px solid #ccc;
  color: #444;
  font-size: 20px;
}

.addon svg {
  width: 20px;
  height: 20px;
  margin-bottom: 4px;
}

.addon:first-child { border-left: 0; }
.addon:last-child { border-right: 0; }

.find { width: 56px; color: #222; }
.find svg { width: 22px; height: 22px; }
.zip { width: 53px; color: #222; }
.none { width: 90px; }
.a-phone { width: 46px; }
.a-mob { width: 39px; }
.a-fax { width: 46px; }
.a-mob svg { width: 13px; }

.hash {
  width: 26px;
  border-left: 0;
  border-right: 0;
  padding-bottom: 3px;
}

.mob { width: 346.9px; }
.joined > input.num { flex: none; width: 309px; }
.phone .ext { border-radius: 5px 0 0 5px; font-size: 18.6px; }
.mob input,
.num { padding: 0 13px; font-size: 18.2px; }
.mob input.fax { font-size: 17px; }

input[type=checkbox] {
  width: 19px;
  height: 19px;
  padding: 0;
  margin: 0 0 5px 7px;
  appearance: none;
  border: 2px solid #767676;
  border-radius: 4px;
  box-shadow: none;
}

input[type=checkbox]:checked {
  width: 21px;
  height: 21px;
  border: 0;
  display: grid;
  place-items: center;
  background: #fa50a0;
}

input[type=checkbox]:checked::after {
  content: "";
  width: 7px;
  height: 13px;
  margin-bottom: 3px;
  border: solid #fff;
  border-width: 0 3px 3px 0;
  transform: rotate(45deg);
}

.dept {
  width: 554px;
  height: 46.5px;
}

.dept .select {
  height: auto;
}

.dept .select b {
  border-radius: 4px 0 0 4px;
  margin-bottom: 4px;
}

.promo {
  width: 128px;
}

.info {
  width: 20px;
  height: 20px;
  margin: 0 3px 4px 9px;
}

.oper {
  width: 290px;
  margin-right: 371px;
}

.toggle {
  display: flex;
}

.toggle a {
  height: 43px;
  display: flex;
  align-items: center;
  padding-right: 21px;
  border: 1px solid #c5dbec;
  background: linear-gradient(#eaf5ff, #e8f4fe 49%, #dceefb 50%, #ecf5fe);
  color: #2e6e9e;
  font-size: 18.8px;
  font-weight: bold;
}

.toggle i {
  width: 16px;
  height: 16px;
  margin-left: 16px;
  border: 2px solid #2e6e9e;
  border-radius: 50%;
}

.toggle .yes {
  width: 91px;
  background: #f7f9fa;
  border-color: #79b7e7;
  border-radius: 0 6px 6px 0;
  color: #e17009;
}

.toggle .yes i {
  margin-left: 17px;
  background: #e17009;
  border-color: #e17009;
}

.toggle .no {
  width: 98px;
  border-right: 0;
  border-radius: 6px 0 0 6px;
}

.oper + .toggle {
  margin-right: auto;
}

.actions {
  display: flex;
  justify-content: flex-end;
  padding-top: 16px;
}

.save {
  width: 148px;
}

/* activity summary */
.well {
  flex: 1;
  height: 248px;
  padding: 16px;
  background: #f4f4f4;
  border: 1px solid #dfe1e1;
  border-radius: 9px;
  box-shadow: inset 0 1px 2px rgba(0,0,0,0.06);
}

.summary {
  height: 198px;
  background: #fff;
  border: 1px solid #d6e9c6;
  border-radius: 6px;
  box-shadow: 0 1px 2px rgba(0,0,0,0.1);
}

.summary-head {
  height: 75px;
  padding: 0 25px 2px 29px;
  display: flex;
  align-items: center;
  justify-content: space-between;
  background: #dff0d8;
  border-bottom: 1px solid #d6e9c6;
  border-radius: 6px 6px 0 0;
  color: #3c763d;
}

.summary-head h2 {
  color: #3c763d;
}

.summary-head svg {
  width: 39px;
  height: 39px;
}

.summary-body {
  padding: 54px 24px 0;
  display: flex;
  align-items: center;
  gap: 7px;
  font-size: 22px;
  line-height: 26px;
}

.summary-body svg {
  width: 28px;
  height: 23px;
}
```
